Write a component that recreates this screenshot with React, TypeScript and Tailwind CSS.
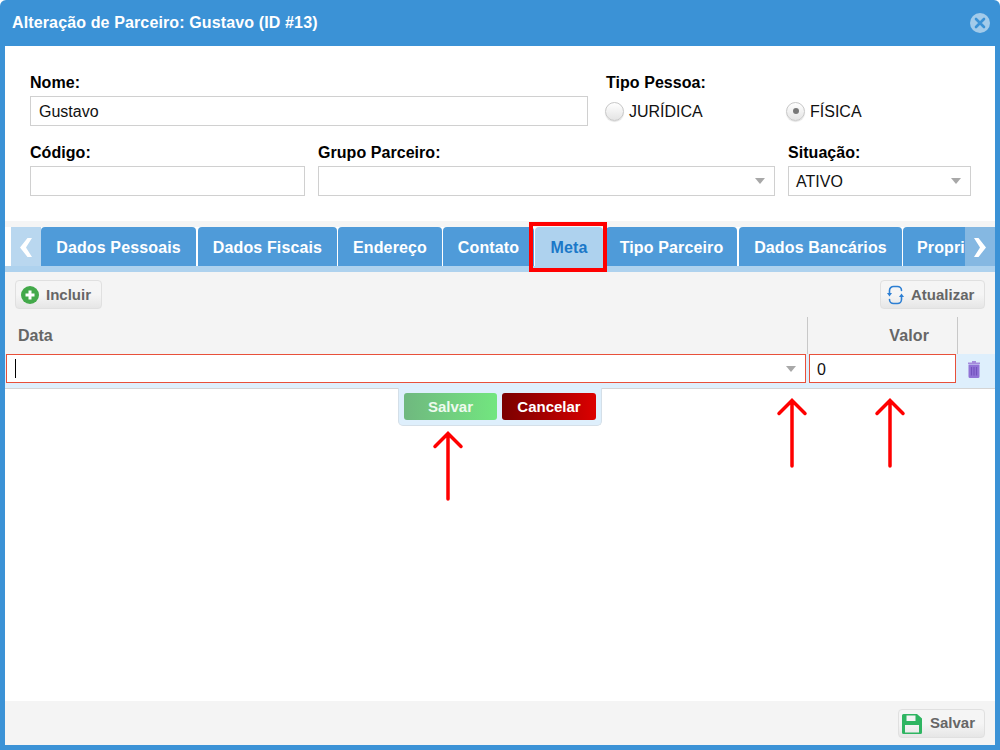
import React from "react";

const Caret = ({ className = "" }: { className?: string }) => (
  <span className={`w-0 h-0 border-x-[5px] border-x-transparent border-t-[6px] border-t-[#a8a8a8] ${className}`} />
);

const Label = ({ children }: { children: React.ReactNode }) => (
  <div className="h-[20px] leading-[20px] text-[16px] font-bold text-black tracking-[0.05px]">{children}</div>
);

const Box = ({ children, w, caret, pad = "pl-[7px]" }: { children?: React.ReactNode; w: string; caret?: boolean; pad?: string }) => (
  <div className={`${w} ${pad} h-[30px] border border-[#d0d0d0] bg-white flex items-center justify-between pr-[9px] text-[16px] text-[#111]`}>
    <span className="pt-[2px]">{children}</span>
    {caret && <Caret />}
  </div>
);

const Radio = ({ checked }: { checked?: boolean }) => (
  <span className="w-[19px] h-[19px] rounded-full border border-[#c8c8c8] bg-gradient-to-b from-white to-[#e4e4e4] flex items-center justify-center shadow-[0_1px_1px_rgba(0,0,0,0.12)]">
    {checked && <span className="w-[6px] h-[6px] rounded-full bg-[#777]" />}
  </span>
);

const Tab = ({ w, children, active }: { w: string; children: React.ReactNode; active?: boolean }) => (
  <div
    className={`${w} shrink-0 h-[39px] pt-[2px] rounded-t-[4px] flex items-center justify-center text-[16px] font-bold tracking-[0.13px] ${
      active ? "bg-[#aed2ee] text-[#1b78c8]" : "bg-[#4f9bd9] text-white"
    }`}
  >
    {children}
  </div>
);

const ToolButton = ({ icon, w, text = "pt-[1px]", children }: { icon: React.ReactNode; w: string; text?: string; children: React.ReactNode }) => (
  <div className={`${w} h-[29px] rounded-[4px] border border-[#e0e0e0] bg-gradient-to-b from-[#f5f5f5] from-50% to-[#e6e6e6] flex items-center text-[15px] font-bold text-[#666]`}>
    {icon}
    <span className={text}>{children}</span>
  </div>
);

const Arrow = ({ className }: { className: string }) => (
  <svg className={`absolute ${className}`} width="32" height="70" viewBox="0 0 32 70" fill="none" stroke="#ff0000" strokeWidth="3.500" strokeLinecap="round">
    <path d="M16 68V3M3 15.500L16 2.500L29 15.500" />
  </svg>
);

export default function App() {
  return (
    <div className="relative w-[1000px] h-[750px] overflow-hidden bg-[#3b92d6] rounded-t-[6px] flex flex-col font-['Liberation_Sans',Arial,sans-serif]">
      <header className="h-[46px] shrink-0 flex items-center justify-between pl-[12px] pr-[10px]">
        <h1 className="text-[16px] font-bold text-white tracking-[0.13px]">Alteração de Parceiro: Gustavo (ID #13)</h1>
        <span className="w-[20px] h-[20px] rounded-full bg-[#a3cbea] flex items-center justify-center -mt-[1px]">
          <svg width="12" height="12" viewBox="0 0 12 12" stroke="#3b92d6" strokeWidth="2.600" strokeLinecap="round">
            <path d="M2 2L10 10M10 2L2 10" />
          </svg>
        </span>
      </header>

      <main className="flex-1 mx-[5px] mb-[5px] bg-white flex flex-col min-h-0">
        <section className="h-[175px] shrink-0 pt-[27px] pl-[25px]">
          <div className="flex">
            <div className="w-[576px]">
              <Label>Nome:</Label>
              <div className="mt-[3px]"><Box w="w-[558px]" pad="pl-[8px]">Gustavo</Box></div>
            </div>
            <div>
              <Label>Tipo Pessoa:</Label>
              <div className="mt-[3px] h-[30px] flex items-center text-[16px] text-[#111]">
                <div className="w-[181px] flex items-center gap-[5px] -ml-[1px]"><Radio /><span className="pt-[1px]">JURÍDICA</span></div>
                <div className="flex items-center gap-[5px]"><Radio checked /><span className="pt-[1px]">FÍSICA</span></div>
              </div>
            </div>
          </div>
          <div className="flex mt-[17px]">
            <div className="w-[288px]">
              <Label>Código:</Label>
              <div className="mt-[3px]"><Box w="w-[275px]" /></div>
            </div>
            <div className="w-[470px]">
              <Label>Grupo Parceiro:</Label>
              <div className="mt-[3px]"><Box w="w-[457px]" caret /></div>
            </div>
            <div>
              <Label>Situação:</Label>
              <div className="mt-[3px]"><Box w="w-[183px]" caret>ATIVO</Box></div>
            </div>
          </div>
        </section>

        <section className="h-[6px] shrink-0 bg-[#f5f5f5]" />

        <nav className="h-[39px] shrink-0 pl-[6px] flex bg-white overflow-hidden">
          <div className="w-[30px] shrink-0 bg-[#b9d7ef] flex items-center justify-center pt-[2px]">
            <svg width="12" height="19" viewBox="0 0 12 19" fill="#ffffff"><path d="M7.500 0H12L6 9.500L12 19H7.500L0 9.500z" /></svg>
          </div>
          <div className="flex-1 flex overflow-hidden">
            <Tab w="w-[155px] mr-[2px]">Dados Pessoais</Tab>
            <Tab w="w-[139px] mr-[1px]">Dados Fiscais</Tab>
            <Tab w="w-[104px] mr-[1px]">Endereço</Tab>
            <Tab w="w-[91px]">Contato</Tab>
            <Tab w="w-[68px] ml-[1px] mr-[3px]" active>Meta</Tab>
            <Tab w="w-[131px] mr-[2px]">Tipo Parceiro</Tab>
            <Tab w="w-[163px] mr-[1px]">Dados Bancários</Tab>
            <Tab w="w-[62px] !justify-start pl-[14px] !rounded-tr-none">Propri</Tab>
          </div>
          <div className="w-[30px] shrink-0 bg-[#85b8e2] flex items-center justify-center pt-[2px]">
            <svg width="12" height="19" viewBox="0 0 12 19" fill="#ffffff"><path d="M4.500 0H0L6 9.500L0 19H4.500L12 9.500z" /></svg>
          </div>
        </nav>

        <section className="h-[6px] shrink-0 bg-[#aed2ee]" />

        <section className="h-[45px] shrink-0 bg-[#f4f4f4] flex items-start justify-between pt-[8px] pl-[10px] pr-[10px]">
          <ToolButton
            w="w-[87px] pl-[5px] gap-[7px]"
            icon={
              <svg width="18" height="18" viewBox="0 0 18 18">
                <circle cx="9" cy="9" r="9" fill="#43a94a" />
                <path d="M9 4.500V13.500M4.500 9H13.500" stroke="#fff" strokeWidth="3" />
              </svg>
            }
          >
            Incluir
          </ToolButton>
          <ToolButton
            w="w-[105px] pl-[6px] gap-[7px]"
            icon={
              <svg width="17" height="20" viewBox="0 0 17 20" fill="none" stroke="#2d7fd3" strokeWidth="1.600" strokeLinecap="round">
                <path d="M2.500 8.500V5.500A4 4 0 0 1 6.500 1.500H10.500A4 4 0 0 1 14.500 5.500" />
                <path d="M14.500 11.500V14.500A4 4 0 0 1 10.500 18.500H6.500A4 4 0 0 1 2.500 14.500" />
                <path d="M0 8h5L2.500 11.500z" fill="#2d7fd3" stroke="none" />
                <path d="M12 12h5L14.500 8.500z" fill="#2d7fd3" stroke="none" />
              </svg>
            }
          >
            Atualizar
          </ToolButton>
        </section>

        <section className="h-[37px] shrink-0 bg-[#f4f4f4] flex text-[16px] font-bold text-[#666]">
          <div className="w-[803px] pl-[13px] pt-[7px] border-r border-[#c8c8c8]">Data</div>
          <div className="w-[150px] pr-[28px] pt-[7px] text-right tracking-[0.1px] border-r border-[#c8c8c8]">Valor</div>
        </section>

        <section className="h-[34px] shrink-0 bg-[#deeffc] flex items-start pl-[1px]">
          <div className="w-[800px] h-[29px] border border-[#e8503a] bg-white flex items-center justify-between pl-[8px] pr-[9px]">
            <span className="w-[1px] h-[19px] bg-black" />
            <Caret />
          </div>
          <div className="w-[147px] h-[29px] ml-[3px] border border-[#e8503a] bg-white flex items-center pl-[7px] pt-[2px] text-[16px] text-[#111]">0</div>
          <div className="w-[36px] h-[29px] flex items-center justify-center">
            <svg width="14" height="18" viewBox="0 0 14 18">
              <path d="M1 2.500h12v1.500H1z M5 1h4v1.500H5z" fill="#a58bdc" />
              <path d="M1.500 4.500h11V16.500a1.500 1.500 0 0 1-1.500 1.500H3a1.500 1.500 0 0 1-1.500-1.500z" fill="#9173d6" />
              <path d="M4.500 7v8.500M7 7v8.500M9.500 7v8.500" stroke="#7352bd" strokeWidth="1.200" />
            </svg>
          </div>
        </section>

        <section className="flex-1 min-h-0 bg-white border-t border-[#d4d4d4] flex justify-center">
          <div className="relative w-[204px] h-[38px] -mt-[1px] bg-[#deeffc] border-x border-b border-[#d4dfe8] rounded-b-[5px] flex gap-[5px] pl-[5px] pt-[5px] z-10">
            <div className="w-[93px] h-[27px] pt-[1px] rounded-[3px] bg-gradient-to-r from-[#6fb87f] to-[#72e67f] flex items-center justify-center text-[15px] font-bold text-[#eefaee]">Salvar</div>
            <div className="w-[94px] h-[27px] pt-[1px] rounded-[3px] bg-gradient-to-r from-[#7a0000] to-[#dc0000] flex items-center justify-center text-[15px] font-bold text-white">Cancelar</div>
          </div>
        </section>

        <footer className="h-[44px] shrink-0 bg-[#f4f4f4] flex items-start justify-end pt-[8px] pr-[10px]">
          <ToolButton
            text=""
            w="w-[87px] pl-[3px] gap-[8px]"
            icon={
              <svg width="20" height="20" viewBox="0 0 20 20" fill="#2fb562">
                <path fillRule="evenodd" d="M0 1.500A1.500 1.500 0 0 1 1.500 0H15l5 4.500V18.500a1.500 1.500 0 0 1-1.500 1.500h-17A1.500 1.500 0 0 1 0 18.500zM4.500 1.500V7h9V1.500zM3 11v7.500h14V11z" />
              </svg>
            }
          >
            Salvar
          </ToolButton>
        </footer>
      </main>

      <div className="absolute left-[529px] top-[222px] w-[78px] h-[50px] border-[4px] border-[#ff0000] pointer-events-none" />
      <Arrow className="left-[432px] top-[431px]" />
      <Arrow className="left-[776px] top-[398px]" />
      <Arrow className="left-[874px] top-[398px]" />
    </div>
  );
}
